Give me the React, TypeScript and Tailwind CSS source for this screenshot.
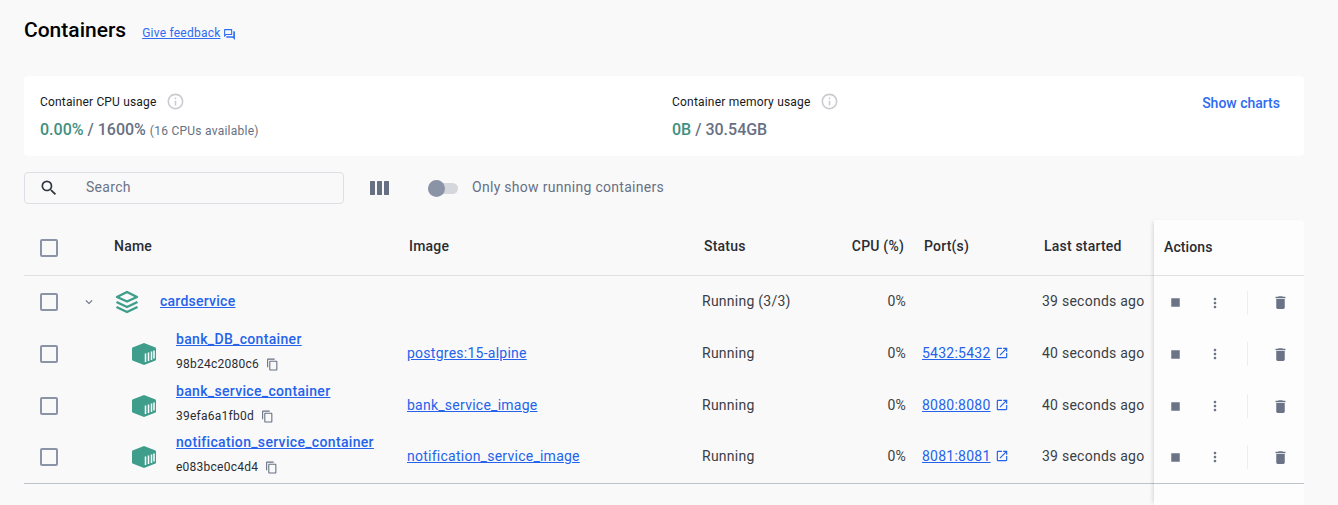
import React from 'react';
import {
  MdContentCopy,
  MdDelete,
  MdInfoOutline,
  MdKeyboardArrowDown,
  MdMoreVert,
  MdOpenInNew,
  MdOutlineForum,
  MdSearch,
  MdStop,
} from 'react-icons/md';

const rowGrid = 'grid grid-cols-[90px_293px_295px_120px_84px_136px_112px] items-center';

interface ContainerRow {
  name: string;
  id: string;
  image: string;
  port: string;
  started: string;
  height: string;
}

const containers: ContainerRow[] = [
  { name: 'bank_DB_container', id: '98b24c2080c6', image: 'postgres:15-alpine', port: '5432:5432', started: '40 seconds ago', height: 'h-[52px]' },
  { name: 'bank_service_container', id: '39efa6a1fb0d', image: 'bank_service_image', port: '8080:8080', started: '40 seconds ago', height: 'h-[52px]' },
  { name: 'notification_service_container', id: 'e083bce0c4d4', image: 'notification_service_image', port: '8081:8081', started: '39 seconds ago', height: 'h-[50px]' },
];

function Checkbox() {
  return <div className="ml-4 h-[18px] w-[18px] rounded-[2px] border-2 border-[#8b93a7]" />;
}

function StackIcon() {
  return (
    <svg width="26" height="24" viewBox="0 0 26 24" fill="none" stroke="#3f9d8c" strokeWidth="2.4" strokeLinejoin="round">
      <path d="M13 2 L23 7 L13 11.5 L3 7 Z" />
      <path d="M2.5 12 L13 17 L23.5 12" />
      <path d="M2.5 17 L13 22 L23.5 17" />
    </svg>
  );
}

function ContainerIcon() {
  return (
    <svg width="26" height="24" viewBox="0 0 26 24" className="mt-px">
      <path d="M13 1 L24.5 5.5 Q25 5.8 25 6.5 V17.5 Q25 18.2 24.5 18.5 L13 23 L1.5 18.5 Q1 18.2 1 17.5 V6.5 Q1 5.8 1.5 5.5 Z" fill="#3f9d8c" />
      <path d="M14.5 11.5 V20 M17.5 10.5 V19 M20.5 9.5 V18 M23 8.5 V16.5" stroke="#fff" strokeWidth="1.5" />
    </svg>
  );
}

function ActionCells({ height }: { height: string }) {
  return (
    <div className={`flex items-center pt-[2px] text-[#6b7387] ${height}`}>
      <div className="flex w-[42px] justify-center">
        <MdStop size={17} />
      </div>
      <div className="flex w-[38px] justify-center">
        <MdMoreVert size={16} />
      </div>
      <div className="ml-[13px] h-6 w-px bg-[#eceef1]" />
      <div className="flex flex-1 justify-center pl-[10px] pr-[2px]">
        <MdDelete size={17} />
      </div>
    </div>
  );
}

export default function App() {
  return (
    <div className="h-[505px] w-[1338px] overflow-hidden bg-[#f9f9fa] pl-6 pr-[34px] font-['Roboto',sans-serif] text-[#1d1f24]">
      <div className="flex h-[76px] items-start pt-[17px]">
        <h1 className="text-[21px] leading-[26px] font-medium text-black">Containers</h1>
        <a href="#" className="ml-4 mt-[8px] text-[12px] leading-[16px] tracking-[0.23px] text-[#2e6bf0] underline">Give feedback</a>
        <MdOutlineForum size={13} className="ml-[3px] mt-[11px] text-[#2e6bf0]" />
      </div>

      <div className="flex h-20 items-start justify-between rounded bg-white pl-4 pr-6 pt-4">
        <div className="flex w-[632px] flex-col">
          <div className="flex items-center text-[12px] leading-[18px] tracking-[0.17px] text-[#17191e]">
            Container CPU usage
            <MdInfoOutline size={19} className="ml-[9px] text-[#c9cbd0]" />
          </div>
          <div className="mt-[9px] text-[16px] leading-[20px] font-medium text-[#677083]">
            <span className="text-[#3f9080]">0.00%</span> / 1600% <span className="text-[12px] font-normal tracking-[0.25px]">(16 CPUs available)</span>
          </div>
        </div>
        <div className="flex flex-1 flex-col">
          <div className="flex items-center text-[12px] leading-[18px] tracking-[0.2px] text-[#17191e]">
            Container memory usage
            <MdInfoOutline size={19} className="ml-[9px] text-[#c9cbd0]" />
          </div>
          <div className="mt-[9px] text-[16px] leading-[20px] font-medium text-[#677083]">
            <span className="text-[#3f9080]">0B</span> / 30.54GB
          </div>
        </div>
        <a href="#" className="mt-px text-[14px] leading-5 font-medium text-[#2e6bf0]">Show charts</a>
      </div>

      <div className="mt-4 flex h-8 items-center">
        <div className="flex h-8 w-80 items-center rounded border border-[#dcdfe3] pl-[14px]">
          <MdSearch size={20} className="text-[#31353d]" />
          <span className="ml-[27px] -mt-px text-[14px] tracking-[0.3px] text-[#6b7387]">Search</span>
        </div>
        <svg width="19" height="14" viewBox="0 0 19 14" fill="#677083" className="ml-[26px]">
          <rect width="5" height="14" rx="0.5" />
          <rect x="7" width="5" height="14" rx="0.5" />
          <rect x="14" width="5" height="14" rx="0.5" />
        </svg>
        <div className="relative ml-[39px] h-[11px] w-[30px] rounded-full bg-[#d5d7dc]">
          <div className="absolute left-0 top-[-3px] h-[17px] w-[17px] rounded-full bg-[#8b93a7]" />
        </div>
        <span className="ml-[14px] -mt-px text-[14px] tracking-[0.29px] text-[#677083]">Only show running containers</span>
      </div>

      <div className="mt-4 flex">
        <div className="w-[1130px]">
          <div className={`${rowGrid} h-[56px] border-b border-[#dfe1e5] text-[14px] font-medium tracking-[0.2px] text-[#2a2c32]`}>
            <Checkbox />
            <span className="-mt-[2px]">Name</span>
            <span className="-mt-[2px] pl-[2px]">Image</span>
            <span className="-mt-[2px] pl-[2px]">Status</span>
            <span className="-mt-[2px] pr-[2px] text-right">CPU (%)</span>
            <span className="-mt-[2px] pl-[18px]">Port(s)</span>
            <span className="-mt-[2px] pl-[2px]">Last started</span>
          </div>

          <div className={`${rowGrid} h-[51px] text-[14px] tracking-[0.25px] text-[#3b3e45]`}>
            <div className="flex items-center">
              <Checkbox />
              <MdKeyboardArrowDown size={14} className="ml-[24px] text-[#677083]" />
            </div>
            <div className="flex items-center">
              <StackIcon />
              <a href="#" className="ml-[20px] font-medium text-[#2563eb] underline">cardservice</a>
            </div>
            <span />
            <span>Running (3/3)</span>
            <span className="text-right">0%</span>
            <span />
            <span className="whitespace-nowrap pr-[10px] text-right">39 seconds ago</span>
          </div>

          {containers.map(c => (
            <div key={c.id} className={`${rowGrid} ${c.height} text-[14px] tracking-[0.25px] text-[#3b3e45]`}>
              <div className="mt-[2px]">
                <Checkbox />
              </div>
              <div className="flex items-center pl-[17px]">
                <ContainerIcon />
                <div className="ml-[19px] flex flex-col">
                  <a href="#" className="-mt-[4px] text-[14px] leading-[18px] tracking-[0.33px] font-medium text-[#2563eb] underline">{c.name}</a>
                  <div className="mt-[8px] flex items-center text-[12px] leading-4 text-[#2a2c32]">
                    {c.id}
                    <MdContentCopy size={13} className="ml-[7px] text-[#677083]" />
                  </div>
                </div>
              </div>
              <a href="#" className="text-[#2563eb] underline">{c.image}</a>
              <span>Running</span>
              <span className="text-right">0%</span>
              <div className="flex items-center pl-[16px]">
                <a href="#" className="text-[#2563eb] underline">{c.port}</a>
                <MdOpenInNew size={14} className="ml-[4px] text-[#2563eb]" />
              </div>
              <span className="whitespace-nowrap pr-[10px] text-right">{c.started}</span>
            </div>
          ))}
          <div className="mt-[2px] border-t border-[#bcc3cd]" />
        </div>

        <div className="h-[285px] w-[150px] rounded-tr bg-[#fdfdfd] shadow-[-3px_0_4px_-2px_rgba(0,0,0,0.14)]">
          <div className="flex h-[56px] items-center border-b border-[#dfe1e5] pl-[10px] text-[14px] font-medium tracking-[0.1px] text-[#2a2c32]">Actions</div>
          <ActionCells height="h-[51px]" />
          {containers.map(c => (
            <ActionCells key={c.id} height={c.height} />
          ))}
          <div className="mt-[2px] border-t border-[#bcc3cd]" />
        </div>
      </div>
    </div>
  );
}
